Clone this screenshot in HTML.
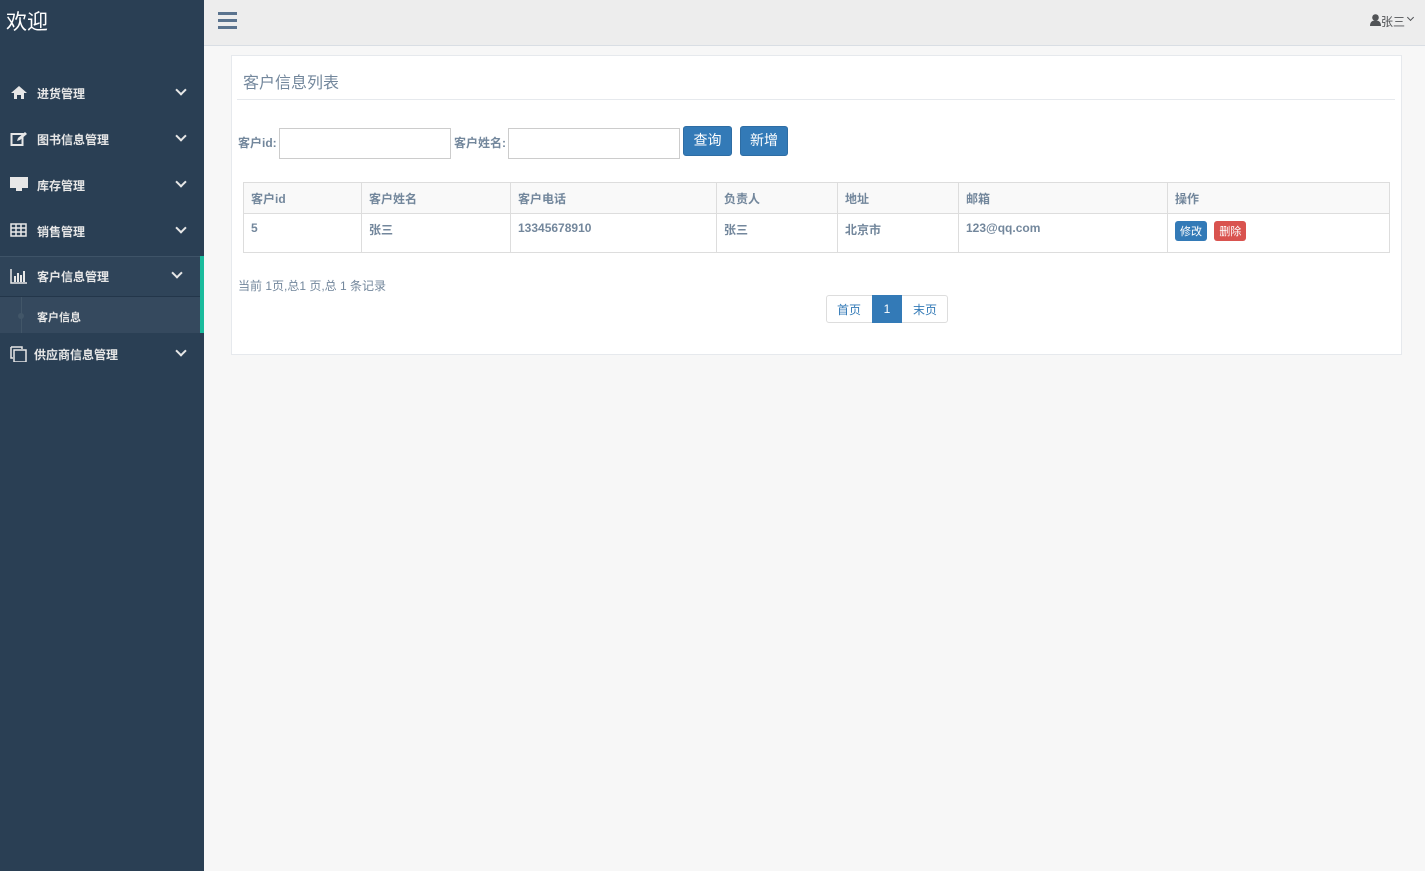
<!DOCTYPE html>
<html><head><meta charset="utf-8"><style>
*{box-sizing:border-box;margin:0;padding:0}
body{width:1425px;height:871px;background:#f7f7f7;font-family:"Liberation Sans","Noto Sans CJK SC",sans-serif;font-size:13px;color:#73879c;position:relative;overflow:hidden}
.side{position:absolute;left:0;top:0;width:204px;height:871px;background:#2a3f54;color:#ecf0f1}
.logo{position:absolute;left:6px;top:6px;font-size:21px;color:#fff}
.mi{position:absolute;left:0;width:204px;height:20px;font-size:12px;color:#e7e7e7;font-weight:bold}
.mi .ic{position:absolute;left:10px;top:0;width:18px;height:16px}
.mi .t{position:absolute;left:37px;top:0}
.mi .ch{position:absolute;left:177px;top:1px;width:8px;height:8px;border-right:2px solid #e7e7e7;border-bottom:2px solid #e7e7e7;transform:rotate(45deg)}
.top{position:absolute;left:204px;top:0;width:1221px;height:46px;background:#ededed;border-bottom:1px solid #d9dee4}
.panel{position:absolute;left:231px;top:55px;width:1171px;height:300px;background:#fff;border:1px solid #e6e9ed}
input{position:absolute;height:31px;border:1px solid #ccc;background:#fff}
.btn{position:absolute;height:30px;background:#337ab7;border:1px solid #2e6da4;border-radius:3px;color:#fff;font-size:14px;text-align:center;line-height:27px}
table{position:absolute;left:243px;top:182px;width:1147px;border-collapse:collapse;font-size:12px;color:#73879c}
td,th{border:1px solid #ddd;text-align:left;padding:0 7px;font-weight:bold}
th{height:31px;background:#f9f9f9;padding-top:0}
td{height:39px;vertical-align:top;padding-top:7px}
.sb{display:inline-block;color:#fff;font-size:11px;padding:2px 5px;border-radius:3px;font-weight:normal}
</style></head><body>
<div class="side">
<div class="logo">欢迎</div>
<div class="mi" style="top:85px"><svg class="ic" viewBox="0 0 18 16"><path d="M1 8 9 1l8 7h-3v6H11v-4H7v4H4V8z" fill="#e7e7e7"/></svg><span class="t">进货管理</span><span class="ch"></span></div>
<div class="mi" style="top:131px"><svg class="ic" viewBox="0 0 18 16"><rect x="1.5" y="3" width="11" height="11" fill="none" stroke="#e7e7e7" stroke-width="2"/><path d="M7 10l1-3 7-6 2 2-7 6z" fill="#e7e7e7"/></svg><span class="t">图书信息管理</span><span class="ch"></span></div>
<div class="mi" style="top:177px"><svg class="ic" viewBox="0 0 18 16"><rect x="0" y="0" width="18" height="11" fill="#e7e7e7"/><rect x="6" y="11" width="6" height="3" fill="#e7e7e7"/></svg><span class="t">库存管理</span><span class="ch"></span></div>
<div class="mi" style="top:223px"><svg class="ic" viewBox="0 0 18 16"><path d="M1 1h15v12H1zM1 5h15M1 9h15M6 1v12M11 1v12" fill="none" stroke="#e7e7e7" stroke-width="1.5"/></svg><span class="t">销售管理</span><span class="ch"></span></div>
<div style="position:absolute;left:0;top:256px;width:204px;height:41px;background:#2f4459;border-top:1px solid #3e5367;border-bottom:1px solid #23364a"></div>
<div style="position:absolute;left:0;top:297px;width:204px;height:36px;background:#35495e"></div>
<div style="position:absolute;left:200px;top:256px;width:4px;height:77px;background:#1abb9c"></div>
<div style="position:absolute;left:21px;top:297px;width:1px;height:36px;background:#425668"></div>
<div style="position:absolute;left:18px;top:313px;width:6px;height:6px;border-radius:3px;background:#425668"></div>
<div class="mi" style="top:268px"><svg class="ic" viewBox="0 0 18 16"><path d="M1 1v14h16" fill="none" stroke="#e7e7e7" stroke-width="1.5"/><path d="M4 8h2v6H4zM7 5h2v9H7zM10 7h2v7h-2zM13 3h2v11h-2z" fill="#e7e7e7"/></svg><span class="t">客户信息管理</span><span class="ch" style="left:173px"></span></div>
<div class="mi" style="top:309px;font-size:11px"><span class="t">客户信息</span></div>
<div class="mi" style="top:346px"><svg class="ic" viewBox="0 0 18 16"><path d="M1 1h11v2M1 1v11h2" fill="none" stroke="#e7e7e7" stroke-width="1.5"/><rect x="4" y="4" width="12" height="12" fill="none" stroke="#e7e7e7" stroke-width="1.5"/></svg><span class="t" style="left:34px">供应商信息管理</span><span class="ch"></span></div>
</div>
<div class="top">
<div style="position:absolute;left:14px;top:12px;width:19px;height:3px;background:#5a738e"></div>
<div style="position:absolute;left:14px;top:19px;width:19px;height:3px;background:#5a738e"></div>
<div style="position:absolute;left:14px;top:26px;width:19px;height:3px;background:#5a738e"></div>
<svg style="position:absolute;left:1166px;top:14px" width="11" height="12" viewBox="0 0 11 12"><circle cx="5.5" cy="3.5" r="3.3" fill="#515356"/><path d="M0 12c0-4 2-5.5 5.5-5.5S11 8 11 12z" fill="#515356"/></svg>
<div style="position:absolute;left:1177px;top:13px;font-size:12px;color:#515356">张三</div>
<div style="position:absolute;left:1204px;top:15px;width:5px;height:5px;border-right:1px solid #515356;border-bottom:1px solid #515356;transform:rotate(45deg)"></div>
</div>
<div class="panel">
<div style="position:absolute;left:11px;top:13px;font-size:16px;color:#73879c">客户信息列表</div>
<div style="position:absolute;left:5px;top:43px;width:1158px;height:1px;background:#e6e9ed"></div>
</div>
<div style="position:absolute;left:238px;top:134px;font-weight:bold;font-size:12px">客户id:</div>
<input style="left:279px;top:128px;width:172px">
<div style="position:absolute;left:454px;top:134px;font-weight:bold;font-size:12px">客户姓名:</div>
<input style="left:508px;top:128px;width:172px">
<div class="btn" style="left:683px;top:126px;width:49px">查询</div>
<div class="btn" style="left:740px;top:126px;width:48px">新增</div>
<table>
<tr><th style="width:118px">客户id</th><th style="width:149px">客户姓名</th><th style="width:206px">客户电话</th><th style="width:121px">负责人</th><th style="width:121px">地址</th><th style="width:209px">邮箱</th><th>操作</th></tr>
<tr><td>5</td><td>张三</td><td>13345678910</td><td>张三</td><td>北京市</td><td>123@qq.com</td><td style="padding-top:7px"><span class="sb" style="background:#337ab7">修改</span> <span class="sb" style="background:#d9534f;margin-left:4px">删除</span></td></tr>
</table>
<div style="position:absolute;left:238px;top:277px;font-size:12px">当前 1页,总1 页,总 1 条记录</div>
<div style="position:absolute;left:826px;top:295px;width:122px;height:28px;border:1px solid #ddd;border-radius:3px;font-size:12px;color:#337ab7">
<span style="position:absolute;left:10px;top:5px">首页</span>
<span style="position:absolute;left:45px;top:-1px;width:30px;height:28px;background:#337ab7;color:#fff;text-align:center;line-height:28px">1</span>
<span style="position:absolute;left:86px;top:5px">末页</span>
</div>
</body></html>
